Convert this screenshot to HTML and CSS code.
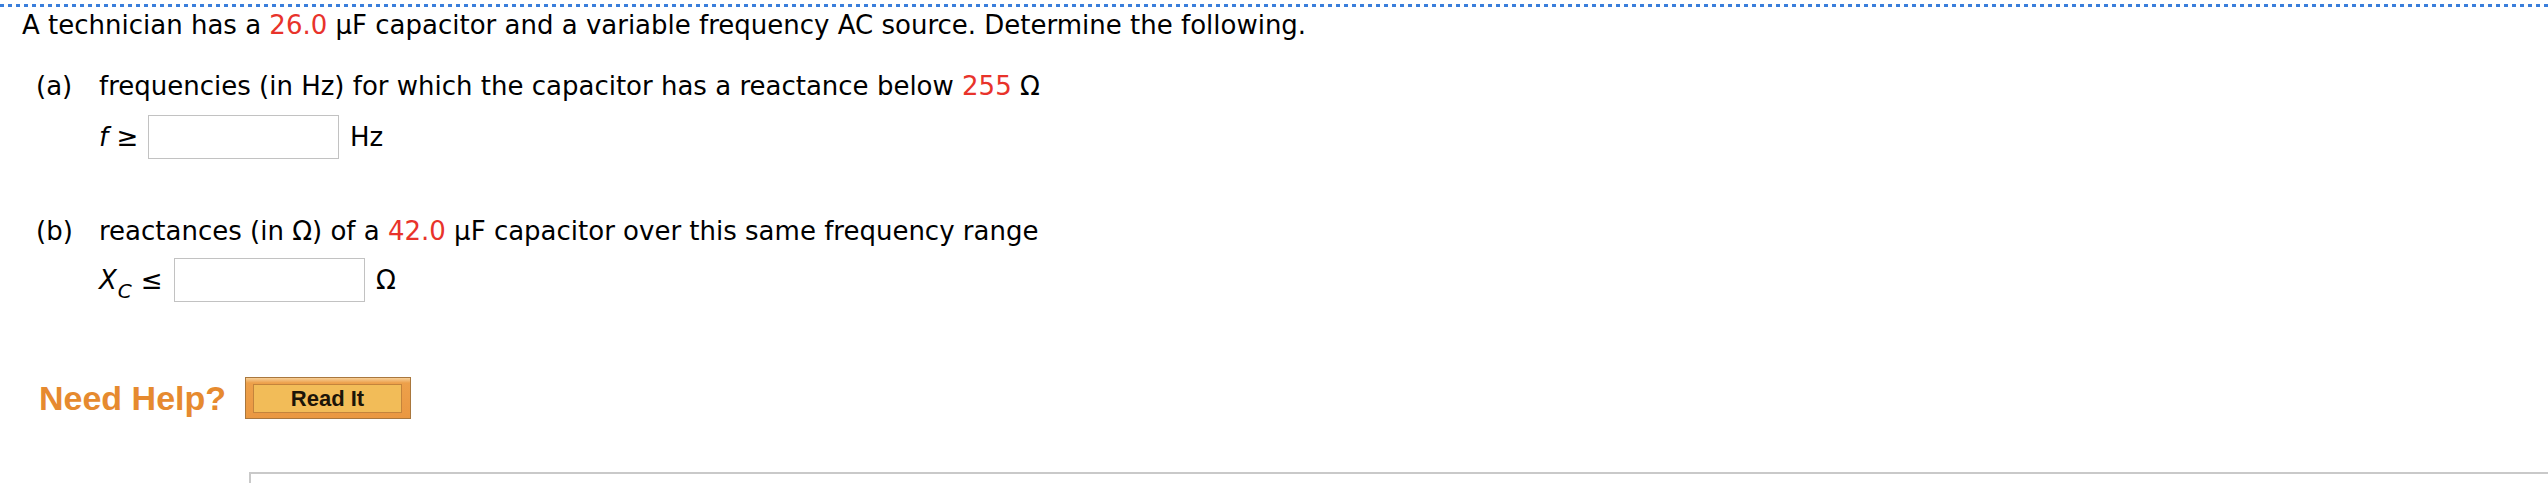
FILE: index.html
```html
<!DOCTYPE html>
<html>
<head>
<meta charset="utf-8">
<link rel="stylesheet" href="styles.css">
</head>
<body>
<div class="rule"></div>
<div class="question">
  <p class="intro">A technician has a <span class="red">26.0</span> µF capacitor and a variable frequency AC source. Determine the following.</p>
  <div class="part part-a">
    <div class="part-head"><span class="label">(a)</span><span>frequencies (in Hz) for which the capacitor has a reactance below <span class="red">255</span> Ω</span></div>
    <div class="answer"><span class="sym"><i>f</i> ≥</span><span class="box box-a"></span><span class="unit">Hz</span></div>
  </div>
  <div class="part part-b">
    <div class="part-head"><span class="label">(b)</span><span>reactances (in Ω) of a <span class="red">42.0</span> µF capacitor over this same frequency range</span></div>
    <div class="answer"><span class="sym sym-b"><i>X</i><sub><i>C</i></sub>≤</span><span class="box box-b"></span><span class="unit">Ω</span></div>
  </div>
  <div class="help">
    <span class="need">Need Help?</span>
    <span class="btn"><span class="btn-inner">Read It</span></span>
  </div>
  <div class="bottom-box"></div>
</div>
</body>
</html>
```
FILE: styles.css
```css
html, body {
  margin: 0;
  padding: 0;
  background: #ffffff;
}
body {
  font-family: "DejaVu Sans", Verdana, sans-serif;
  font-size: 26px;
  color: #000;
  overflow: hidden;
}
.rule {
  margin-top: 4px;
  height: 3px;
  background: repeating-linear-gradient(to right, #3a7edb 0 4px, transparent 4px 8px);
}
.question {
  padding-left: 22px;
}
.intro {
  margin: 0;
  line-height: 36px;
}
.red {
  color: #e8332b;
}
.part-head {
  display: flex;
  line-height: 36px;
  padding-left: 14px;
}
.label {
  width: 63px;
  flex: none;
}
.part-a .part-head {
  margin-top: 25px;
}
.part-b .part-head {
  margin-top: 54px;
}
.answer {
  display: flex;
  align-items: center;
  padding-left: 77px;
  height: 44px;
}
.part-a .answer {
  margin-top: 11px;
}
.part-b .answer {
  margin-top: 9px;
}
.sym {
  width: 49px;
  flex: none;
}
.sym-b {
  width: 75px;
}
.sym sub {
  font-size: 20px;
  vertical-align: -9px;
  line-height: 0;
  margin-left: 1px;
  margin-right: 9px;
}
.box {
  width: 189px;
  height: 42px;
  border: 1px solid #c2c2c2;
  flex: none;
}
.unit {
  margin-left: 11px;
}
.help {
  display: flex;
  align-items: center;
  margin-top: 75px;
  padding-left: 17px;
  height: 42px;
}
.need {
  font-family: "Liberation Sans", Arial, sans-serif;
  font-weight: bold;
  font-size: 34px;
  color: #e68a2f;
  width: 206px;
  flex: none;
}
.btn {
  box-sizing: border-box;
  width: 166px;
  height: 42px;
  border: 1px solid #a9773d;
  background: linear-gradient(#f6cf98 0, #eda04a 5px, #ea9842 100%);
  padding: 6px 8px 5px 7px;
  display: flex;
  flex: none;
}
.btn-inner {
  flex: 1;
  border: 1px solid #c4843c;
  background: #f2bc58;
  font-family: "Liberation Sans", Arial, sans-serif;
  font-weight: bold;
  font-size: 22px;
  color: #1c1408;
  display: flex;
  align-items: center;
  justify-content: center;
}
.bottom-box {
  margin-top: 53px;
  margin-left: 227px;
  height: 9px;
  border-top: 2px solid #c9c9c9;
  border-left: 2px solid #c9c9c9;
}
```
